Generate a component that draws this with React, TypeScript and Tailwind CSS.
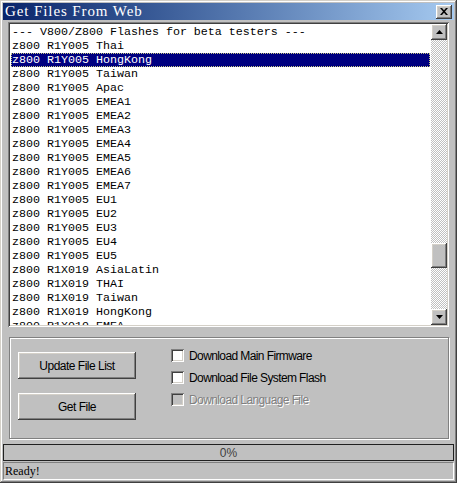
import React from "react";

const rows = [
  "--- V800/Z800 Flashes for beta testers ---",
  "z800 R1Y005 Thai",
  "z800 R1Y005 HongKong",
  "z800 R1Y005 Taiwan",
  "z800 R1Y005 Apac",
  "z800 R1Y005 EMEA1",
  "z800 R1Y005 EMEA2",
  "z800 R1Y005 EMEA3",
  "z800 R1Y005 EMEA4",
  "z800 R1Y005 EMEA5",
  "z800 R1Y005 EMEA6",
  "z800 R1Y005 EMEA7",
  "z800 R1Y005 EU1",
  "z800 R1Y005 EU2",
  "z800 R1Y005 EU3",
  "z800 R1Y005 EU4",
  "z800 R1Y005 EU5",
  "z800 R1X019 AsiaLatin",
  "z800 R1X019 THAI",
  "z800 R1X019 Taiwan",
  "z800 R1X019 HongKong",
  "z800 R1X019 EMEA",
];

const raised =
  "shadow-[inset_-1px_-1px_#404040,inset_1px_1px_#ffffff,inset_-2px_-2px_#808080,inset_2px_2px_#d4d0c8]";

function Arrow({ up }: { up?: boolean }) {
  return (
    <svg width="7" height="4" viewBox="0 0 7 4">
      {up ? <polygon points="3.5,0 7,4 0,4" fill="#000" /> : <polygon points="0,0 7,0 3.5,4" fill="#000" />}
    </svg>
  );
}

function Check({ disabled, label }: { disabled?: boolean; label: string }) {
  return (
    <div className="flex items-center h-[13px]">
      <div
        className={`w-[13px] h-[13px] shrink-0 ${disabled ? "bg-[#c0c0c0]" : "bg-white"} shadow-[inset_1px_1px_#808080,inset_-1px_-1px_#ffffff,inset_2px_2px_#404040,inset_-2px_-2px_#d4d0c8]`}
      />
      <span
        className={`ml-[5px] text-[12px] tracking-[-0.6px] leading-none whitespace-nowrap ${
          disabled ? "text-[#808080] [text-shadow:1px_1px_#ffffff]" : "text-black"
        }`}
      >
        {label}
      </span>
    </div>
  );
}

function Btn({ label }: { label: string }) {
  return (
    <div
      className={`w-[118px] h-[27px] flex items-center justify-center bg-[#c0c0c0] ${raised} text-[12px] tracking-[-0.5px] text-black`}
    >
      {label}
    </div>
  );
}

export default function App() {
  return (
    <div
      className="w-[457px] h-[483px] bg-[#c0c0c0] p-[3px] flex flex-col shadow-[inset_-1px_-1px_#404040,inset_1px_1px_#d4d0c8,inset_-2px_-2px_#808080,inset_2px_2px_#ffffff] overflow-hidden"
      style={{ fontFamily: '"Liberation Sans", Arial, sans-serif' }}
    >
      {/* Title bar */}
      <div className="h-[17px] shrink-0 flex items-center justify-between bg-gradient-to-r from-[#0a246a] to-[#a6caf0] pl-[2px] pr-[2px]">
        <span className="text-white text-[15px] tracking-[0.9px] leading-none font-['Liberation_Serif',serif] whitespace-nowrap">
          Get Files From Web
        </span>
        <div className={`w-[16px] h-[14px] bg-[#c0c0c0] ${raised} flex items-center justify-center`}>
          <svg width="8" height="7" viewBox="0 0 8 7">
            <path d="M0 0h2l2 2.2L6 0h2L5 3.5 8 7H6L4 4.8 2 7H0l3-3.5z" fill="#000" />
          </svg>
        </div>
      </div>

      {/* List box */}
      <div className="mt-[2px] ml-[5px] w-[441px] h-[305px] shrink-0 p-[2px] flex bg-white shadow-[inset_1px_1px_#808080,inset_-1px_-1px_#ffffff,inset_2px_2px_#404040,inset_-2px_-2px_#d4d0c8]">
        <div className="flex-1 overflow-hidden pt-[1px] font-['Liberation_Mono',monospace] text-[11.67px] leading-[14px]">
          {rows.map((r, i) => (
            <div
              key={i}
              className={`h-[14px] mx-[1px] pl-[1px] whitespace-pre ${
                i === 2
                  ? "bg-[#000080] text-white outline-1 outline-dotted outline-[#c8c880] -outline-offset-1"
                  : "text-black"
              }`}
            >
              {r}
            </div>
          ))}
        </div>
        <div className="w-[16px] flex flex-col bg-[image:repeating-conic-gradient(#ffffff_0_25%,#c0c0c0_0_50%)] bg-[length:2px_2px]">
          <div className={`h-[16px] shrink-0 bg-[#c0c0c0] ${raised} flex items-center justify-center`}>
            <Arrow up />
          </div>
          <div className="h-[203px] shrink-0" />
          <div className={`h-[25px] shrink-0 bg-[#c0c0c0] ${raised}`} />
          <div className="flex-1" />
          <div className={`h-[16px] shrink-0 bg-[#c0c0c0] ${raised} flex items-center justify-center`}>
            <Arrow />
          </div>
        </div>
      </div>

      {/* Group */}
      <div className="mt-[10px] ml-[6px] w-[440px] h-[102px] shrink-0 border border-[#808080] shadow-[inset_1px_1px_#ffffff,1px_1px_#ffffff] flex pl-[8px]">
        <div className="flex flex-col gap-[14px] pt-[14px]">
          <Btn label="Update File List" />
          <Btn label="Get File" />
        </div>
        <div className="ml-[35px] pt-[11px] flex flex-col gap-[9px]">
          <Check label="Download Main Firmware" />
          <Check label="Download File System Flash" />
          <Check label="Download Language File" disabled />
        </div>
      </div>

      {/* Progress */}
      <div className="mt-[5px] h-[17px] shrink-0 border border-[#202020] flex items-center justify-center text-[12px] text-[#404040] leading-none">
        0%
      </div>

      {/* Status */}
      <div className="mt-[1px] h-[18px] shrink-0 border-t border-l border-[#808080] border-b border-r border-b-white border-r-white flex items-center pl-[1px] font-['Liberation_Serif',serif] text-[12px] text-black leading-none">
        Ready!
      </div>
    </div>
  );
}
